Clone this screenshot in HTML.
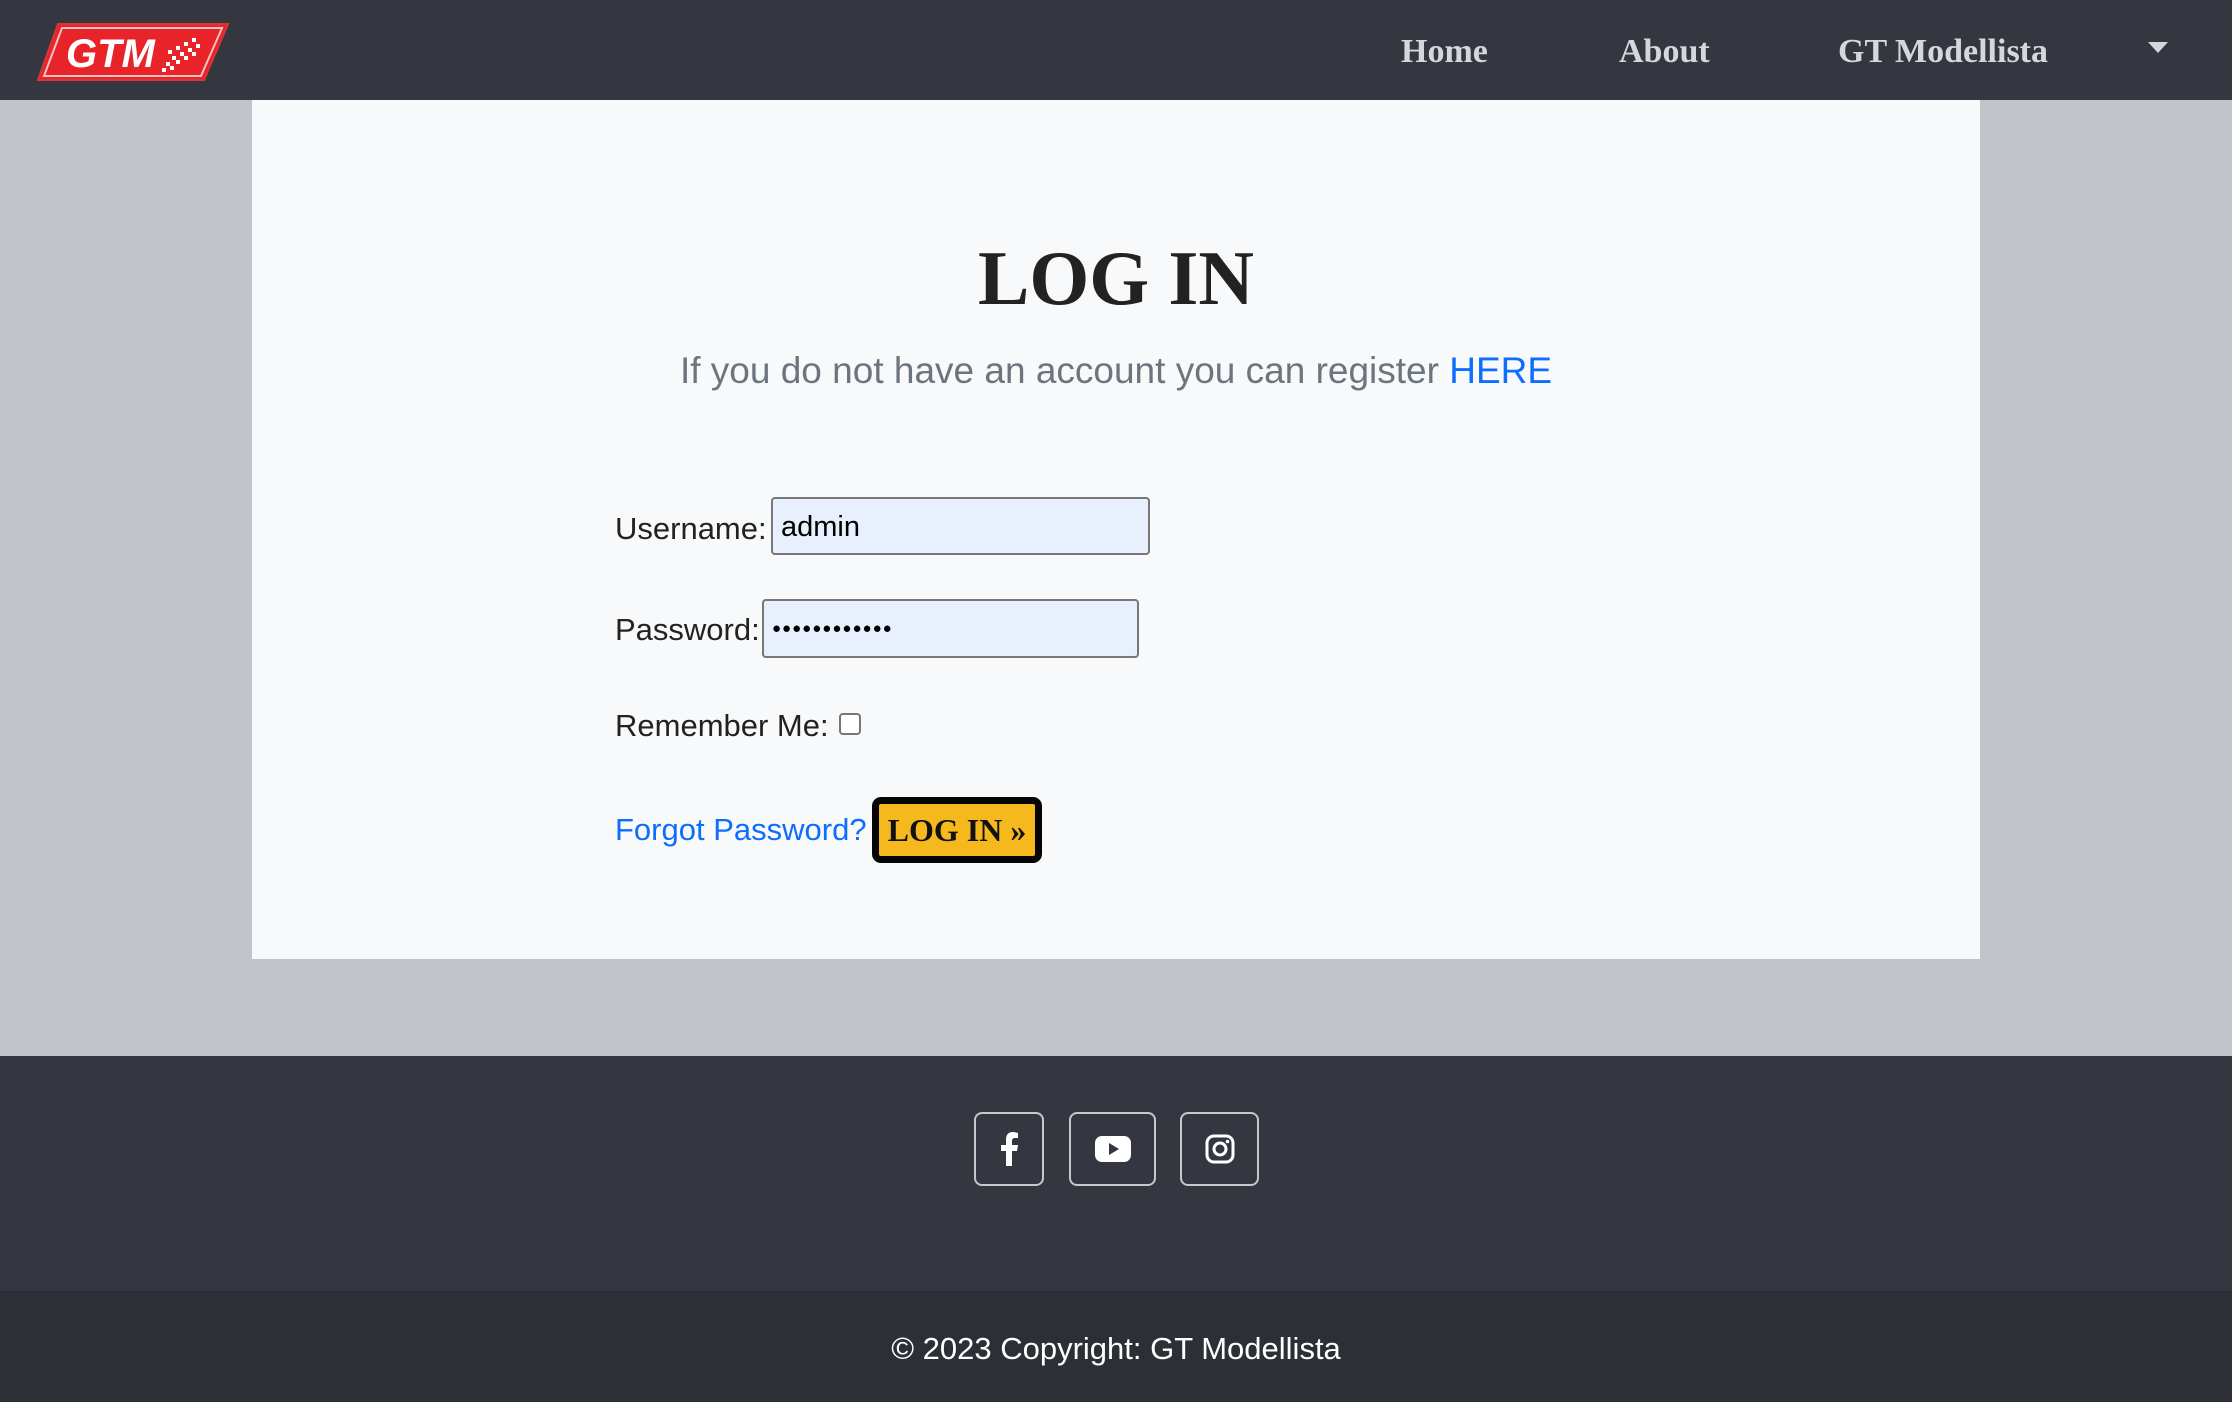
<!DOCTYPE html>
<html><head><meta charset="utf-8"><style>
*{margin:0;padding:0;box-sizing:border-box}
body{width:2232px;height:1402px;background:#c1c4cb;font-family:"Liberation Sans",sans-serif;position:relative;overflow:hidden}
.nav{position:absolute;left:0;top:0;width:2232px;height:100px;background:#343740}
.nl{position:absolute;top:33px;font-family:"Liberation Serif",serif;font-weight:bold;font-size:34px;color:#d6d7da;white-space:nowrap}
.card{position:absolute;left:252px;top:100px;width:1728px;height:859px;background:#f8f9fa}
.t{position:absolute;font-size:31px;color:#222;white-space:nowrap}
.inp{position:absolute;background:#e8f0fe;border:2px solid #777;border-radius:4px;font-size:29px;color:#000;padding-left:8px;line-height:56px}
.foot{position:absolute;left:0;top:1056px;width:2232px;height:235px;background:#343740}
.bot{position:absolute;left:0;top:1291px;width:2232px;height:111px;background:#2c2f35}
.ib{position:absolute;top:1112px;height:74px;border:2px solid #c8c8c8;border-radius:8px;display:flex;align-items:center;justify-content:center}
</style></head><body>
<div class="nav">
<svg style="position:absolute;left:36px;top:22px" width="194" height="60" viewBox="0 0 194 60">
<polygon points="22,2 192,2 168,58 2,58" fill="#e8232a" stroke="#d33" stroke-width="2"/>
<polygon points="26,6 186,6 165,54 8,54" fill="none" stroke="#f3c3c3" stroke-width="2"/>
<text x="30" y="45" font-family="Liberation Sans" font-weight="bold" font-style="italic" font-size="40" fill="#fff">GTM</text>
<g fill="#fff"><rect x="132" y="28" width="4" height="4"/><rect x="140" y="24" width="4" height="4"/><rect x="148" y="20" width="4" height="4"/><rect x="156" y="16" width="4" height="4"/><rect x="136" y="34" width="4" height="4"/><rect x="144" y="30" width="4" height="4"/><rect x="152" y="26" width="4" height="4"/><rect x="160" y="22" width="4" height="4"/><rect x="130" y="40" width="4" height="4"/><rect x="140" y="38" width="4" height="4"/><rect x="148" y="34" width="4" height="4"/><rect x="156" y="30" width="4" height="4"/><rect x="126" y="46" width="4" height="4"/><rect x="134" y="44" width="4" height="4"/></g>
</svg>
<div class="nl" style="left:1401px">Home</div>
<div class="nl" style="left:1619px">About</div>
<div class="nl" style="left:1838px">GT Modellista</div>
<svg style="position:absolute;left:2148px;top:42px" width="20" height="12"><polygon points="0,0 20,0 10,11" fill="#d6d7da"/></svg>
</div>
<div class="card"></div>
<div style="position:absolute;left:0;width:2232px;top:234px;text-align:center;font-family:'Liberation Serif',serif;font-weight:bold;font-size:77px;color:#222">LOG IN</div>
<div style="position:absolute;left:0;width:2232px;top:350px;text-align:center;font-size:37px;color:#6c757d;font-weight:300">If you do not have an account you can register <span style="color:#0d6efd">HERE</span></div>
<div class="t" style="left:615px;top:511px">Username:</div>
<div class="inp" style="left:771px;top:497px;width:379px;height:58px">admin</div>
<div class="t" style="left:615px;top:612px">Password:</div>
<div class="inp" style="left:762px;top:599px;width:377px;height:59px;font-size:15px;letter-spacing:1px">●●●●●●●●●●●●</div>
<div class="t" style="left:615px;top:708px">Remember Me:</div>
<div style="position:absolute;left:839px;top:713px;width:22px;height:22px;border:2px solid #777;border-radius:4px;background:#fff"></div>
<div class="t" style="left:615px;top:812px;color:#0d6efd">Forgot Password?</div>
<div style="position:absolute;left:872px;top:797px;width:170px;height:66px;background:#f6b91d;border:7px solid #050505;border-radius:9px;font-family:'Liberation Serif',serif;font-weight:bold;font-size:32px;color:#111;text-align:center;line-height:52px">LOG IN »</div>
<div class="foot"></div>
<div class="ib" style="left:974px;width:70px"><svg width="20" height="34" viewBox="0 0 20 34"><path d="M13 34V19h5l1-6h-6V9c0-2 1-3 3-3h3V1c-1 0-3-1-5-1-5 0-7 3-7 8v5H2v6h5v15z" fill="#fff"/></svg></div>
<div class="ib" style="left:1069px;width:87px"><svg width="36" height="26" viewBox="0 0 36 26"><rect width="36" height="26" rx="7" fill="#fff"/><polygon points="14,7 24,13 14,19" fill="#343740"/></svg></div>
<div class="ib" style="left:1180px;width:79px"><svg width="30" height="30" viewBox="0 0 30 30"><rect x="2" y="2" width="26" height="26" rx="7" fill="none" stroke="#fff" stroke-width="3"/><circle cx="15" cy="15" r="6" fill="none" stroke="#fff" stroke-width="3"/><circle cx="22.5" cy="7.5" r="1.8" fill="#fff"/></svg></div>
<div class="bot"></div>
<div style="position:absolute;left:0;width:2232px;top:1331px;text-align:center;font-size:31px;color:#fff">© 2023 Copyright: GT Modellista</div>
</body></html>
